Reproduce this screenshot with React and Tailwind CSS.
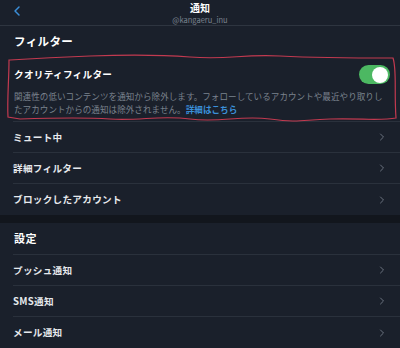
import { ChevronLeft, ChevronRight } from 'lucide-react';

const font = { fontFamily: '"Noto Sans CJK JP", "Noto Sans", sans-serif' };

function Row({ label, last }) {
  return (
    <div className={`ml-[13px] h-[31px] flex items-center justify-between pr-[12px] ${last ? '' : 'border-b border-[#2a313c]'}`}>
      <span className="text-[9.6px] font-bold text-[#e6e9ed] tracking-[0.3px]">{label}</span>
      <ChevronRight size={12} strokeWidth={2} className="text-[#6b7380]" />
    </div>
  );
}

export default function App() {
  return (
    <div className="relative w-[400px] h-[348px] overflow-hidden bg-[#1a202b] text-white" style={font}>
      {/* Header */}
      <div className="relative h-[26px] border-b border-[#2e3540] flex flex-col items-center pt-[2px] gap-[2px]">
        <ChevronLeft size={16} strokeWidth={2.2} className="absolute left-[9px] top-[3px] text-[#3b8fd9]" />
        <span className="text-[10px] font-bold leading-[11px]">通知</span>
        <span className="text-[7.5px] leading-[9px] text-[#7c8490]">@kangaeru_inu</span>
      </div>

      {/* Filters */}
      <div className="h-[32px] flex items-center pl-[14px]">
        <span className="text-[11.5px] font-bold tracking-[0.4px]">フィルター</span>
      </div>

      <div className="ml-[13px] pr-[10px] pt-[7px] pb-[5px] border-b border-[#2a313c]">
        <div className="flex items-center justify-between pl-[1px]">
          <span className="text-[9.6px] font-bold tracking-[0.3px]">クオリティフィルター</span>
          <div className="w-[31px] h-[19px] rounded-full bg-[#4cb862] flex items-center justify-end pr-[2px]">
            <div className="w-[16px] h-[16px] rounded-full bg-white" />
          </div>
        </div>
        <p className="mt-[6px] pl-[1px] text-[8.55px] leading-[13px] text-[#7b838e] tracking-[0.05px]">
          関連性の低いコンテンツを通知から除外します。フォローしているアカウントや最近やり取りしたアカウントからの通知は除外されません。
          <span className="text-[#3b8fd9] font-semibold">詳細はこちら</span>
        </p>
      </div>

      <Row label="ミュート中" />
      <Row label="詳細フィルター" />
      <Row label="ブロックしたアカウント" last />

      <div className="h-[8px] bg-[#12161d]" />

      {/* Settings */}
      <div className="ml-[13px] h-[32px] flex items-center border-b border-[#2a313c]">
        <span className="text-[11px] font-bold tracking-[0.4px] pl-[1px]">設定</span>
      </div>
      <Row label="プッシュ通知" />
      <Row label="SMS通知" />
      <Row label="メール通知" last />

      {/* Hand-drawn annotation */}
      <svg className="absolute left-0 top-0 pointer-events-none" width="400" height="348" viewBox="0 0 400 348">
        <path
          d="M10 60 C 40 58, 60 57, 90 56 S 150 54, 190 57 S 240 54, 280 56 S 350 58, 393 58 C 397 70, 394 90, 396 118 C 380 121, 360 118, 330 119 S 300 123, 270 119 S 220 123, 190 119 S 140 121, 110 119 S 50 118, 20 119 L 8 117 C 7 100, 9 80, 9 60 Z"
          fill="none"
          stroke="#c23a50"
          strokeWidth="1.2"
        />
      </svg>
    </div>
  );
}
